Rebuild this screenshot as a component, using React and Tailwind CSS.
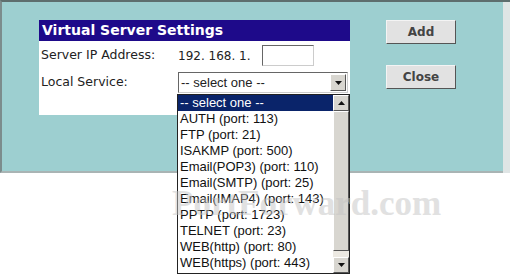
import React from 'react';

const services = [
  'AUTH (port: 113)',
  'FTP (port: 21)',
  'ISAKMP (port: 500)',
  'Email(POP3) (port: 110)',
  'Email(SMTP) (port: 25)',
  'Email(IMAP4) (port: 143)',
  'PPTP (port: 1723)',
  'TELNET (port: 23)',
  'WEB(http) (port: 80)',
  'WEB(https) (port: 443)',
];

function Arrow({ up }) {
  return (
    <svg width="7" height="4" viewBox="0 0 7 4">
      <path d={up ? 'M0 4 L3.5 0 L7 4 Z' : 'M0 0 L7 0 L3.5 4 Z'} fill="#111" />
    </svg>
  );
}

function Button({ children }) {
  return (
    <button className="w-[70px] h-[24px] bg-[#e2e2e2] border border-t-[#f4f4f4] border-l-[#f4f4f4] border-r-[#555] border-b-[#555] text-[12px] font-bold text-[#444] font-['DejaVu_Sans',sans-serif]">
      {children}
    </button>
  );
}

export default function App() {
  return (
    <div className="relative w-[510px] h-[277px] bg-white overflow-hidden font-['DejaVu_Sans',sans-serif]">
      {/* Teal frame */}
      <div className="flex">
        <div className="w-[503px] h-[173px] bg-[#9dcfd0] border-t-2 border-l-2 border-b-2 border-t-[#5e6e6e] border-l-[#7c8c8c] border-b-[#a9b4b4] flex">
          {/* Settings panel */}
          <div className="ml-[37px] mt-[18px] w-[311px] h-[95px] bg-white">
            <div className="h-[21px] bg-[#1e0a8a] text-white font-bold text-[14px] leading-[21px] pl-[3px]">
              Virtual Server Settings
            </div>
            <div className="flex items-center mt-[4px] h-[21px] pl-[2px] text-[12.5px] text-[#222]">
              <span className="w-[137px]">Server IP Address:</span>
              <span className="w-[84px] text-[12px]">192. 168. 1.</span>
              <span className="w-[52px] h-[21px] border border-t-[#666] border-l-[#666] border-r-[#ccc] border-b-[#ccc] bg-white" />
            </div>
            <div className="flex items-center mt-[6px] h-[21px] pl-[2px] text-[12.5px] text-[#222]">
              <span className="w-[137px]">Local Service:</span>
              <div className="flex items-center w-[170px] h-[21px] border border-t-[#666] border-l-[#666] border-r-[#ccc] border-b-[#ccc] bg-white font-['Liberation_Sans',sans-serif] text-[13px]">
                <span className="flex-1 pl-[2px]">-- select one --</span>
                <span className="w-[16px] h-[17px] mr-[1px] bg-[#d8d6d0] border border-t-white border-l-white border-r-[#555] border-b-[#555] flex items-center justify-center">
                  <Arrow />
                </span>
              </div>
            </div>
          </div>
          {/* Buttons */}
          <div className="ml-[36px] mt-[18px] flex flex-col gap-[21px]">
            <Button>Add</Button>
            <Button>Close</Button>
          </div>
        </div>
        <div className="flex-1 h-[173px] bg-[#dfe5e5] border-t-2 border-[#5e6e6e]" />
      </div>

      {/* Open dropdown list */}
      <div className="absolute left-[177px] top-[94px] w-[173px] h-[180px] bg-white border border-[#222] flex font-['Liberation_Sans',sans-serif] text-[13px] text-[#111]">
        <div className="flex-1 flex flex-col">
          <div className="h-[16px] leading-[16px] pl-[2px] bg-[#0a246a] text-white">-- select one --</div>
          {services.map((s) => (
            <div key={s} className="h-[16px] leading-[16px] pl-[2px]">{s}</div>
          ))}
        </div>
        <div className="w-[16px] flex flex-col bg-[#ece9e2]">
          <div className="h-[16px] bg-[#d8d6d0] border border-t-white border-l-white border-r-[#555] border-b-[#555] flex items-center justify-center">
            <Arrow up />
          </div>
          <div className="h-[140px] bg-[#d8d6d0] border border-t-white border-l-white border-r-[#555] border-b-[#555]" />
          <div className="flex-1" />
          <div className="h-[16px] bg-[#d8d6d0] border border-t-white border-l-white border-r-[#555] border-b-[#555] flex items-center justify-center">
            <Arrow />
          </div>
        </div>
      </div>

      {/* Watermark */}
      <div className="absolute left-[172px] top-[186px] text-[35px] leading-none font-bold text-[#c4c4c4] opacity-50 font-['Liberation_Serif',serif] pointer-events-none">
        PortForward.com
      </div>
    </div>
  );
}
